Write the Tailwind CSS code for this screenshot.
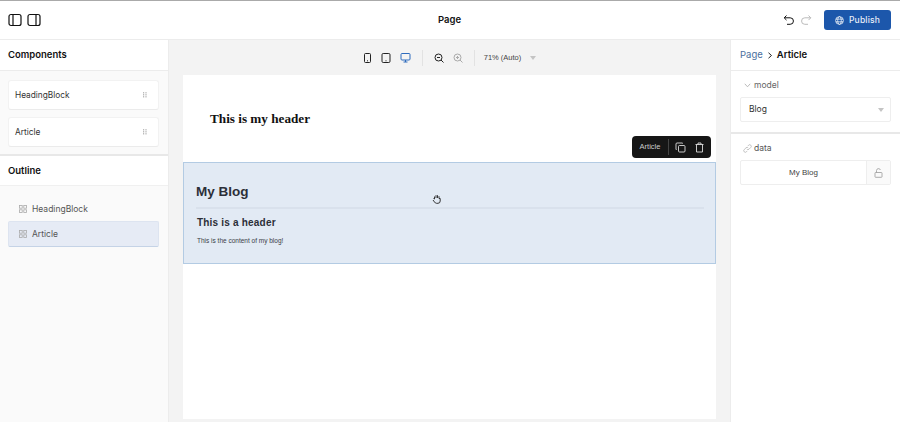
<!DOCTYPE html>
<html lang="en">
<head>
  <meta charset="UTF-8" />
  <title>Page</title>
  <script src="https://cdn.jsdelivr.net/npm/@tailwindcss/browser@4"></script>
</head>
<body class="bg-white h-[422px] w-[900px] overflow-hidden font-['Inter',sans-serif] text-[#111]">
  <div class="flex flex-col h-[422px] border-t border-[#aaa]">
    <!-- top bar -->
    <header class="h-[39px] shrink-0 flex items-center justify-between pl-[8px] pr-[9px] border-b border-[#ececec]">
      <div class="flex-1 flex items-center gap-[5px]">
        <svg class="w-[14px] h-[14px]" viewBox="0 0 14 14" fill="none" stroke="#111" stroke-width="1.2"><rect x="1" y="1.5" width="12" height="11" rx="2"/><path d="M5 1.5v11"/></svg>
        <svg class="w-[14px] h-[14px]" viewBox="0 0 14 14" fill="none" stroke="#111" stroke-width="1.2"><rect x="1" y="1.5" width="12" height="11" rx="2"/><path d="M9 1.5v11"/></svg>
      </div>
      <div class="text-[9.500px] font-semibold">Page</div>
      <div class="flex-1 flex items-center justify-end">
        <svg class="w-[12px] h-[12px]" viewBox="0 0 12 12" fill="none" stroke="#111" stroke-width="1"><path d="M3.500 1.500 1.200 3.800l2.300 2.300M1.200 3.800h6a3 3 0 0 1 0 6.500H4"/></svg>
        <svg class="w-[12px] h-[12px] ml-[5px]" viewBox="0 0 12 12" fill="none" stroke="#bbb" stroke-width="1"><path d="M8.500 1.500l2.300 2.300-2.300 2.300M10.800 3.800h-6a3 3 0 0 0 0 6.500H8"/></svg>
        <button class="ml-[12px] w-[67px] h-[20px] rounded-[3px] bg-[#1c57ab] text-[#e8eef8] text-[8.500px] font-medium flex items-center justify-center gap-[5px] tracking-[0.02em]">
          <svg class="w-[9px] h-[9px]" viewBox="0 0 10 10" fill="none" stroke="#fff" stroke-width="0.8"><circle cx="5" cy="5" r="4.3"/><ellipse cx="5" cy="5" rx="2" ry="4.3"/><path d="M.8 3.500h8.400M.8 6.500h8.400"/></svg>
          Publish
        </button>
      </div>
    </header>

    <div class="flex flex-1 min-h-0">
      <!-- left panel -->
      <aside class="w-[169px] shrink-0 border-r border-[#ececec] bg-[#fafafa] flex flex-col">
        <div class="h-[31px] bg-white border-b border-[#ececec] flex items-center pl-[8px] text-[9.500px] font-semibold">Components</div>
        <div class="h-[85px] pl-[8px] pr-[9px] pt-[9px] flex flex-col gap-[7px] border-b-2 border-[#e8e8e8]">
          <div class="h-[30px] bg-white border border-[#f2f2f2] border-b-[#ebebeb] rounded-[3px] flex items-center justify-between pl-[6px] pr-[11px] text-[8.300px] text-[#333]">
            HeadingBlock
            <svg class="w-[4px] h-[6px]" viewBox="0 0 5 7" fill="#aaa"><rect x="0" y="0" width="1.500" height="1.500"/><rect x="3" y="0" width="1.500" height="1.500"/><rect x="0" y="2.500" width="1.500" height="1.500"/><rect x="3" y="2.500" width="1.500" height="1.500"/><rect x="0" y="5" width="1.500" height="1.500"/><rect x="3" y="5" width="1.500" height="1.500"/></svg>
          </div>
          <div class="h-[30px] bg-white border border-[#f2f2f2] border-b-[#ebebeb] rounded-[3px] flex items-center justify-between pl-[6px] pr-[11px] text-[8.300px] text-[#333]">
            Article
            <svg class="w-[4px] h-[6px]" viewBox="0 0 5 7" fill="#aaa"><rect x="0" y="0" width="1.500" height="1.500"/><rect x="3" y="0" width="1.500" height="1.500"/><rect x="0" y="2.500" width="1.500" height="1.500"/><rect x="3" y="2.500" width="1.500" height="1.500"/><rect x="0" y="5" width="1.500" height="1.500"/><rect x="3" y="5" width="1.500" height="1.500"/></svg>
          </div>
        </div>
        <div class="h-[30px] pt-px bg-white border-b border-[#f0f0f0] flex items-center pl-[8px] text-[9.500px] font-semibold">Outline</div>
        <div class="pl-[8px] pr-[9px] pt-[11px]">
          <div class="h-[24px] flex items-center pl-[11px] gap-[5px] text-[8.500px] text-[#555]">
            <svg class="w-[8px] h-[8px]" viewBox="0 0 8 8" fill="none" stroke="#aaa" stroke-width="0.800"><rect x=".5" y=".5" width="2.700" height="2.700"/><rect x="4.800" y=".5" width="2.700" height="2.700"/><rect x=".5" y="4.800" width="2.700" height="2.700"/><rect x="4.800" y="4.800" width="2.700" height="2.700"/></svg>
            HeadingBlock
          </div>
          <div class="h-[26px] flex items-center pl-[10px] gap-[5px] text-[8.500px] text-[#555] bg-[#e6ebf5] border border-[#dde4f0] border-b-[#c5d3e6] rounded-[2px]">
            <svg class="w-[8px] h-[8px]" viewBox="0 0 8 8" fill="none" stroke="#aaa" stroke-width="0.800"><rect x=".5" y=".5" width="2.700" height="2.700"/><rect x="4.800" y=".5" width="2.700" height="2.700"/><rect x=".5" y="4.800" width="2.700" height="2.700"/><rect x="4.800" y="4.800" width="2.700" height="2.700"/></svg>
            Article
          </div>
        </div>
      </aside>

      <!-- canvas -->
      <main class="flex-1 bg-[#f3f3f3] flex flex-col min-w-0">
        <div class="h-[35px] shrink-0 flex items-center justify-center text-[#333]">
          <svg class="w-[9px] h-[10px]" viewBox="0 0 9 10" fill="none" stroke="#222" stroke-width="1"><rect x="1.500" y=".5" width="6" height="9" rx="1"/><path d="M4 7.800h1"/></svg>
          <svg class="w-[10px] h-[10px] ml-[9px]" viewBox="0 0 10 10" fill="none" stroke="#222" stroke-width="1"><rect x="1" y=".5" width="8" height="9" rx="1.200"/><path d="M4.500 7.800h1"/></svg>
          <svg class="w-[11px] h-[10px] ml-[9px]" viewBox="0 0 11 10" fill="none" stroke="#2d6bbd" stroke-width="1"><rect x="1" y=".5" width="9" height="6.500" rx="1"/><path d="M3.500 9h4M5.500 7v2"/></svg>
          <div class="w-px h-[16px] bg-[#e2e2e2] ml-[11px]"></div>
          <svg class="w-[10px] h-[10px] ml-[11px]" viewBox="0 0 10 10" fill="none" stroke="#222" stroke-width="1"><circle cx="4.500" cy="4.500" r="3.500"/><path d="M7 7l2.500 2.500M3 4.500h3"/></svg>
          <svg class="w-[10px] h-[10px] ml-[9px]" viewBox="0 0 10 10" fill="none" stroke="#aaa" stroke-width="1"><circle cx="4.500" cy="4.500" r="3.500"/><path d="M7 7l2.500 2.500M3 4.500h3M4.500 3v3"/></svg>
          <div class="w-px h-[16px] bg-[#e2e2e2] ml-[11px]"></div>
          <span class="ml-[9px] text-[7.500px] text-[#444] font-['Liberation_Sans',sans-serif]">71% (Auto)</span>
          <span class="ml-[9px] w-0 h-0 border-x-[3.500px] border-x-transparent border-t-[4px] border-t-[#c4c4c4]"></span>
        </div>
        <div class="relative ml-[14px] w-[533px] h-[344px] bg-white font-['Liberation_Sans',sans-serif]">
          <div class="h-[87px] pl-[27px] pt-[35px] font-['Liberation_Serif',serif] font-bold text-[13.200px] leading-[17px] text-[#111]">This is my header</div>
          <div class="h-[102px] bg-[#e2eaf4] border border-[#b3cbe3] pl-[12px] pr-[11px] pt-[20px] text-[#2c2f38]">
            <h1 class="text-[13.500px] leading-[17px] font-bold">My Blog</h1>
            <div class="h-[2px] bg-[#d9e1ec] mt-[7px]"></div>
            <h2 class="text-[10px] leading-[13px] font-bold mt-[7px] ml-px tracking-[0.02em]">This is a header</h2>
            <p class="text-[6.500px] leading-[8px] mt-[8px] ml-px text-[#3a3d46]">This is the content of my blog!</p>
          </div>

          <!-- selected block toolbar -->
          <div class="absolute left-[449px] top-[61px] w-[79px] h-[22px] rounded-[4px] bg-[#161616] flex items-center text-white">
            <span class="w-[36px] text-center text-[7.500px] text-[#ccc] font-['Liberation_Sans',sans-serif]">Article</span>
            <div class="w-px h-[16px] bg-[#444]"></div>
            <svg class="w-[11px] h-[11px] ml-[6px]" viewBox="0 0 11 11" fill="none" stroke="#ddd" stroke-width="0.900"><rect x="3.500" y="3.500" width="6.500" height="6.500" rx="1"/><path d="M7.500 1.500V1H2a1 1 0 0 0-1 1v5.500h.6"/></svg>
            <svg class="w-[11px] h-[11px] ml-[8px]" viewBox="0 0 11 11" fill="none" stroke="#ddd" stroke-width="0.900"><path d="M1.500 2.500h8M4 2.500V1h3v1.500M2.500 2.500V10h6V2.500"/></svg>
          </div>

          <!-- grab cursor -->
          <svg class="absolute left-[249px] top-[119px] w-[10px] h-[10px]" viewBox="0 0 10 10" fill="none" stroke="#222" stroke-width="0.900"><path d="M2.500 5V2.500M4 4V1.200M5.500 4V1.200M7 4.500V2.200M2.500 5 1.500 4.500M7 4.500h1.200V7A2.300 2.300 0 0 1 6 9.300H4.500A2.500 2.500 0 0 1 2.500 8L1 6"/></svg>
        </div>
      </main>

      <!-- right panel -->
      <aside class="w-[170px] shrink-0 border-l border-[#ececec] bg-white flex flex-col">
        <div class="h-[31px] border-b border-[#ececec] flex items-center pl-[9px] text-[9.500px]">
          <span class="text-[#4a6f9e]">Page</span>
          <svg class="w-[6px] h-[7px] mx-[4px]" viewBox="0 0 6 7" fill="none" stroke="#222" stroke-width="1"><path d="M1.500.8 4.500 3.500 1.500 6.200"/></svg>
          <span class="font-semibold">Article</span>
        </div>
        <div class="h-[63px] border-b-2 border-[#e8e8e8] px-[9px] pt-[9px]">
          <div class="flex items-center text-[8.500px] text-[#666] leading-[11px] pl-[4px]">
            <svg class="w-[7px] h-[5px] mr-[3px]" viewBox="0 0 7 5" fill="none" stroke="#aaa" stroke-width="0.800"><path d="M.8.800 3.500 3.800 6.200.8"/></svg>
            model
          </div>
          <div class="mt-[6px] h-[25px] border border-[#eeeeee] rounded-[2px] flex items-center justify-between pl-[8px] pr-[6px] text-[8.500px] text-[#333]">
            Blog
            <span class="w-0 h-0 border-x-[3.500px] border-x-transparent border-t-[4px] border-t-[#c4c4c4]"></span>
          </div>
        </div>
        <div class="px-[9px] pt-[9px]">
          <div class="flex items-center text-[8.500px] text-[#555] leading-[11px]">
            <svg class="w-[9px] h-[9px] mr-[2px] ml-[3px]" viewBox="0 0 9 9" fill="none" stroke="#aaa" stroke-width="0.700"><path d="M3.800 5.200a1.500 1.500 0 0 0 2.200 0l1.800-1.800A1.500 1.500 0 0 0 5.600 1.200l-.8.800M5.200 3.800a1.500 1.500 0 0 0-2.200 0L1.200 5.600a1.500 1.500 0 0 0 2.200 2.200l.8-.8"/></svg>
            data
          </div>
          <div class="mt-[6px] h-[25px] border border-[#eeeeee] rounded-[2px] flex items-center text-[8px] text-[#444] font-['Liberation_Sans',sans-serif]">
            <span class="flex-1 text-center">My Blog</span>
            <span class="w-[24px] h-full border-l border-[#eeeeee] bg-[#fafafa] flex items-center justify-center">
              <svg class="w-[9px] h-[10px]" viewBox="0 0 9 10" fill="none" stroke="#999" stroke-width="0.800"><rect x="1" y="4.500" width="7" height="4.800" rx=".6"/><path d="M2.500 4.500V2.500a2 2 0 0 1 3.900-.5"/></svg>
            </span>
          </div>
        </div>
      </aside>
    </div>
  </div>
</body>
</html>
